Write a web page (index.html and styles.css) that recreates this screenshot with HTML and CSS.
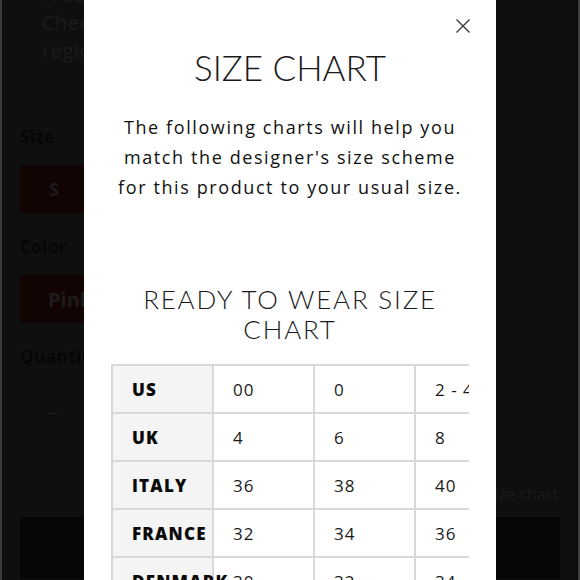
FILE: index.html
```html
<!DOCTYPE html>
<html lang="en">
<head>
<meta charset="utf-8">
<title>Size chart</title>
<link rel="stylesheet" href="styles.css">
</head>
<body>
<div class="page">
  <div class="product">
    <p class="note">Free shipping.<br>Check availability in<br>regional stores.</p>
    <div class="field">
      <div class="label">Size</div>
      <div class="options"><span class="opt opt-size">S</span><span class="opt opt-size">M</span></div>
    </div>
    <div class="field">
      <div class="label">Color</div>
      <div class="options"><span class="opt opt-color">Pink</span></div>
    </div>
    <div class="field">
      <div class="label">Quantity</div>
      <div class="qty"><span class="minus"></span><span>1</span><span>+</span></div>
    </div>
    <div class="chart-link">View size chart</div>
    <div class="cart">Add to cart</div>
  </div>

  <div class="modal">
    <button class="close" aria-label="Close">
      <svg width="16" height="16" viewBox="0 0 16 16"><path d="M1.5 1.5 L14.5 14.5 M14.5 1.5 L1.5 14.5" stroke="#3a3a3a" stroke-width="1.4" fill="none"/></svg>
    </button>
    <h1 class="title">SIZE CHART</h1>
    <p class="intro">The following charts will help you match the designer's size scheme for this product to your usual size.</p>
    <h2 class="subtitle">READY TO WEAR SIZE CHART</h2>
    <div class="table-wrap">
      <table class="chart">
        <tbody>
          <tr><th>US</th><td>00</td><td>0</td><td>2 - 4</td><td>6 - 8</td></tr>
          <tr><th>UK</th><td>4</td><td>6</td><td>8</td><td>10</td></tr>
          <tr><th>ITALY</th><td>36</td><td>38</td><td>40</td><td>42</td></tr>
          <tr><th>FRANCE</th><td>32</td><td>34</td><td>36</td><td>38</td></tr>
          <tr><th>DENMARK</th><td>30</td><td>32</td><td>34</td><td>36</td></tr>
          <tr><th>GERMANY</th><td>30</td><td>32</td><td>34</td><td>36</td></tr>
        </tbody>
      </table>
    </div>
  </div>
</div>
</body>
</html>
```

FILE: styles.css
```css
* { box-sizing: border-box; }
html, body { margin: 0; padding: 0; }
body {
  width: 580px;
  height: 580px;
  overflow: hidden;
  background: #0f0f0f;
  font-family: "Open Sans", "DejaVu Sans", sans-serif;
}
.page {
  position: relative;
  width: 580px;
  height: 580px;
  border-left: 2px solid #3c3c3c;
  border-right: 2px solid #3c3c3c;
  background: #0f0f0f;
  overflow: hidden;
}
.product {
  padding: 0 18px;
  display: flex;
  flex-direction: column;
}
.note {
  margin: -19px 0 0 22px;
  font-size: 20px;
  line-height: 28px;
  color: #1c1c1c;
  letter-spacing: 0.5px;
}
.field { margin-top: 22px; }
.note + .field { margin-top: 60px; }
.label {
  font-weight: 700;
  font-size: 17px;
  color: #060606;
  letter-spacing: 0.5px;
  line-height: 24px;
}
.options { display: flex; gap: 10px; margin-top: 16px; }
.opt {
  height: 48px;
  display: flex;
  align-items: center;
  justify-content: center;
  background: #130404;
  color: #1c1c1c;
  font-weight: 700;
  font-size: 18px;
}
.opt-size { width: 68px; }
.opt-color { padding: 0 28px; font-size: 20px; }
.qty {
  display: flex;
  gap: 30px;
  align-items: center;
  height: 48px;
  margin-top: 20px;
  padding-left: 30px;
  color: #141414;
}
.minus { width: 8px; height: 1px; background: #262626; }
.chart-link {
  margin-top: 46px;
  align-self: flex-end;
  margin-right: 2px;
  font-size: 16px;
  line-height: 22px;
  color: #1b1b1b;
}
.cart {
  margin-top: 12px;
  height: 62px;
  background: #060606;
  color: #0c0c0c;
  display: flex;
  align-items: center;
  justify-content: center;
}

.modal {
  position: absolute;
  left: 82px;
  top: 0;
  width: 412px;
  height: 580px;
  background: #fff;
  overflow: hidden;
  padding: 0 27px;
  text-align: center;
  color: #1a1a1a;
}
.close {
  position: absolute;
  top: 18px;
  right: 25px;
  width: 16px;
  height: 16px;
  padding: 0;
  border: 0;
  background: none;
  display: block;
}
.close svg { display: block; }
.title {
  margin: 45px 0 0;
  font-family: "Lato", sans-serif;
  font-weight: 300;
  font-size: 35px;
  line-height: 44px;
  letter-spacing: 0;
  color: #1a1a1a;
}
.intro {
  margin: 23px auto 0;
  width: 354px;
  font-size: 18px;
  line-height: 30px;
  letter-spacing: 1.6px;
  color: #111;
}
.subtitle {
  margin: 82px 0 0;
  font-family: "Lato", sans-serif;
  font-weight: 300;
  font-size: 26px;
  line-height: 30px;
  letter-spacing: 1.8px;
  color: #1a1a1a;
}
.table-wrap {
  margin-top: 20px;
  width: 358px;
  overflow: hidden;
}
.chart {
  border-collapse: collapse;
  table-layout: fixed;
  width: 505px;
  text-align: left;
}
.chart th, .chart td {
  width: 101px;
  height: 48px;
  border: 2px solid #d8d8d8;
  white-space: nowrap;
  padding: 0 0 0 19px;
  font-size: 17px;
  letter-spacing: 1px;
  color: #1a1a1a;
}
.chart th {
  background: #f4f4f4;
  font-weight: 800;
  letter-spacing: 1.2px;
  color: #0a0a0a;
  overflow: visible;
}
.chart td { font-weight: 400; }
```
